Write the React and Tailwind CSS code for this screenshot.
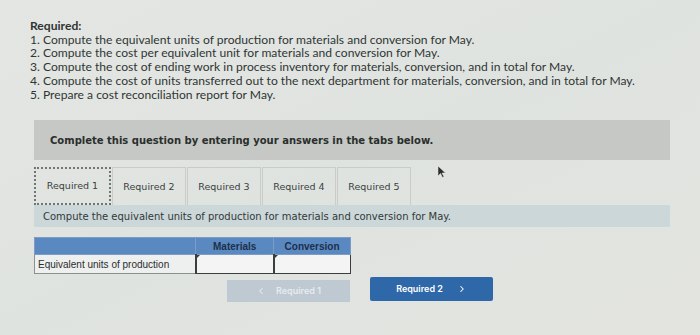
import { ChevronLeft, ChevronRight } from "lucide-react";

const tasks = [
    "1. Compute the equivalent units of production for materials and conversion for May.",
    "2. Compute the cost per equivalent unit for materials and conversion for May.",
    "3. Compute the cost of ending work in process inventory for materials, conversion, and in total for May.",
    "4. Compute the cost of units transferred out to the next department for materials, conversion, and in total for May.",
    "5. Prepare a cost reconciliation report for May.",
];

const tabs = ["Required 1", "Required 2", "Required 3", "Required 4", "Required 5"];

export default function App() {
    return (
        <div className="w-[700px] h-[335px] overflow-hidden bg-gradient-to-br from-[#e4e6e3] via-[#dfe3e0] to-[#e3e4df] relative">
            {/* Instructions */}
            <div className="pt-[19px] pl-[30px] font-['Lato',sans-serif] text-[12.1px] leading-[13.7px] text-[#2f3533]">
                <div className="font-bold">Required:</div>
                {tasks.map((t) => (
                    <div key={t}>{t}</div>
                ))}
            </div>

            <div className="ml-[34px] w-[636px] mt-[19px]">
                {/* Banner */}
                <div className="h-[40px] bg-[#c5c8c4] flex items-center pl-[16px] font-['DejaVu_Sans',sans-serif] font-bold text-[10px] text-[#2a2e2c]">
                    Complete this question by entering your answers in the tabs below.
                </div>

                {/* Tabs */}
                <div className="flex mt-[7px] font-['DejaVu_Sans',sans-serif] text-[9.5px] text-[#3a3f3d] gap-[1px]">
                    {tabs.map((t, i) => (
                        <div
                            key={t}
                            className={`h-[38px] w-[74px] flex items-center justify-center ${i === 0 ? "border-2 border-dotted border-[#6f7572] w-[77px]" : "border border-[#c9ccc8] border-b-0"}`}
                        >
                            {t}
                        </div>
                    ))}
                </div>

                {/* Sub heading */}
                <div className="h-[22px] bg-[#cbd7d9] flex items-center pl-[9px] font-['DejaVu_Sans',sans-serif] text-[10px] text-[#333937]">
                    Compute the equivalent units of production for materials and conversion for May.
                </div>

                {/* Table */}
                <table className="mt-[10px] w-[317px] border-collapse font-['Liberation_Sans',sans-serif] text-[10px]">
                    <thead>
                        <tr className="h-[17px] bg-[#5a89c2] text-[#1d2f4a] font-bold">
                            <th className="w-[162px] border border-[#7d9cc4]"></th>
                            <th className="w-[78px] border border-[#7d9cc4]">Materials</th>
                            <th className="w-[77px] border border-[#7d9cc4]">Conversion</th>
                        </tr>
                    </thead>
                    <tbody>
                        <tr className="h-[19px]">
                            <td className="bg-[#eef0ef] border border-[#8c908e] pl-[3px] text-[#2a2e2c]">Equivalent units of production</td>
                            <td className="bg-[#f3f4f3] border border-[#3a3e3c] border-l-2 relative">
                                <span className="absolute left-0 top-0 border-t-[3px] border-r-[3px] border-t-[#3a3e3c] border-r-transparent" />
                            </td>
                            <td className="bg-[#f3f4f3] border border-[#3a3e3c] border-l-2 relative">
                                <span className="absolute left-0 top-0 border-t-[3px] border-r-[3px] border-t-[#3a3e3c] border-r-transparent" />
                            </td>
                        </tr>
                    </tbody>
                </table>

                {/* Nav buttons */}
                <div className="flex items-start ml-[193px] mt-[3px] gap-[20px] font-['Inter',sans-serif] font-semibold text-[9px]">
                    <div className="w-[123px] h-[22px] mt-[3px] bg-[#bfc9d2] text-[#e6ebef] flex items-center justify-center gap-[10px]">
                        <ChevronLeft className="w-[10px] h-[10px]" strokeWidth={2.5} />
                        <span>Required 1</span>
                    </div>
                    <div className="w-[123px] h-[24px] bg-[#2f68a8] text-white rounded-[2px] flex items-center justify-center gap-[14px]">
                        <span>Required 2</span>
                        <ChevronRight className="w-[10px] h-[10px]" strokeWidth={2.5} />
                    </div>
                </div>
            </div>

            {/* Mouse cursor */}
            <svg className="absolute left-[438px] top-[166px]" width="8" height="12" viewBox="0 0 8 12">
                <path d="M0 0 L0 10 L2.5 7.5 L4.5 11.5 L6 10.8 L4 7 L7.5 7 Z" fill="#2a2d2c" stroke="#f0f0f0" strokeWidth="0.5" />
            </svg>
        </div>
    );
}
